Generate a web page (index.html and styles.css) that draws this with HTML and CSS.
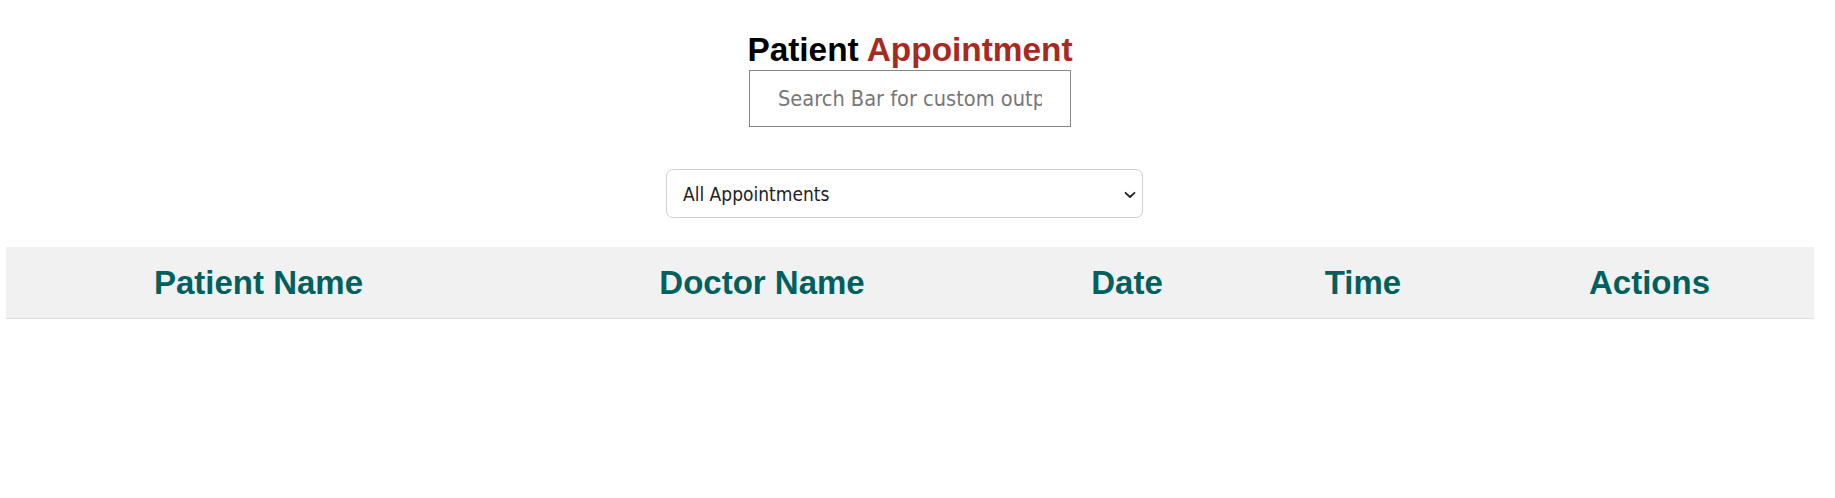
FILE: index.html
```html
<!DOCTYPE html>
<html lang="en">
<head>
<meta charset="utf-8">
<title>Patient Appointment</title>
<link rel="stylesheet" href="styles.css">
</head>
<body>
  <div class="page">
    <header class="top">
      <h2 class="title">Patient <span class="accent">Appointment</span></h2>
      <input class="search" type="text" placeholder="Search Bar for custom output">
    </header>
    <div class="filter-row">
      <div class="select-wrap">
        <select class="filter">
          <option>All Appointments</option>
          <option>Upcoming</option>
          <option>Past</option>
        </select>
        <svg class="chevron" width="12" height="8" viewBox="0 0 12 8" aria-hidden="true">
          <path d="M1.5 1.8 L6 6 L10.5 1.8" fill="none" stroke="#222" stroke-width="1.8" stroke-linecap="round" stroke-linejoin="round"/>
        </svg>
      </div>
    </div>
    <table class="appts">
      <thead>
        <tr>
          <th class="c-patient">Patient Name</th>
          <th class="c-doctor">Doctor Name</th>
          <th class="c-date">Date</th>
          <th class="c-time">Time</th>
          <th class="c-actions">Actions</th>
        </tr>
      </thead>
      <tbody></tbody>
    </table>
  </div>
</body>
</html>
```

FILE: styles.css
```css
* {
  box-sizing: border-box;
}

html, body {
  margin: 0;
  padding: 0;
  background: #ffffff;
}

body {
  font-family: "Liberation Sans", Arial, sans-serif;
  color: #000;
}

.page {
  width: 1820px;
  padding: 0 6px;
}

.top {
  display: flex;
  flex-direction: column;
  align-items: center;
}

.title {
  margin: 31px 0 1px;
  font-size: 33.4px;
  line-height: 38px;
  font-weight: bold;
  color: #000;
}

.accent {
  color: #a62a1f;
}

.search {
  width: 322px;
  height: 57px;
  margin: 0;
  padding: 0 28px;
  border: 1px solid #858585;
  border-radius: 0;
  background: #fff;
  font-family: "DejaVu Sans Condensed", "DejaVu Sans", sans-serif;
  font-size: 21.6px;
  color: #333;
  outline: none;
}

.search::placeholder {
  color: #777777;
}

.filter-row {
  display: flex;
  margin-top: 42px;
  padding-left: 660px;
}

.select-wrap {
  position: relative;
  width: 477px;
  height: 49px;
}

.filter {
  appearance: none;
  -webkit-appearance: none;
  width: 100%;
  height: 100%;
  margin: 0;
  padding: 0 40px 0 16px;
  border: 1px solid #cfcfcf;
  border-radius: 7px;
  background: #fff;
  font-family: "DejaVu Sans Condensed", "DejaVu Sans", sans-serif;
  font-size: 19px;
  color: #222;
  outline: none;
}

.chevron {
  position: absolute;
  right: 7px;
  top: 22px;
  pointer-events: none;
}

.appts {
  width: 1808px;
  margin-top: 29px;
  border-collapse: collapse;
  table-layout: fixed;
}

.appts th {
  padding: 17px 0 16px;
  background: #f1f1f1;
  border-bottom: 1px solid #dddddd;
  color: #005f5f;
  font-size: 33px;
  line-height: 38px;
  font-weight: bold;
  text-align: center;
}

.c-patient { width: 505px; }
.c-doctor { width: 502px; }
.c-date { width: 228px; }
.c-time { width: 244px; }
.c-actions { width: 329px; }
```
